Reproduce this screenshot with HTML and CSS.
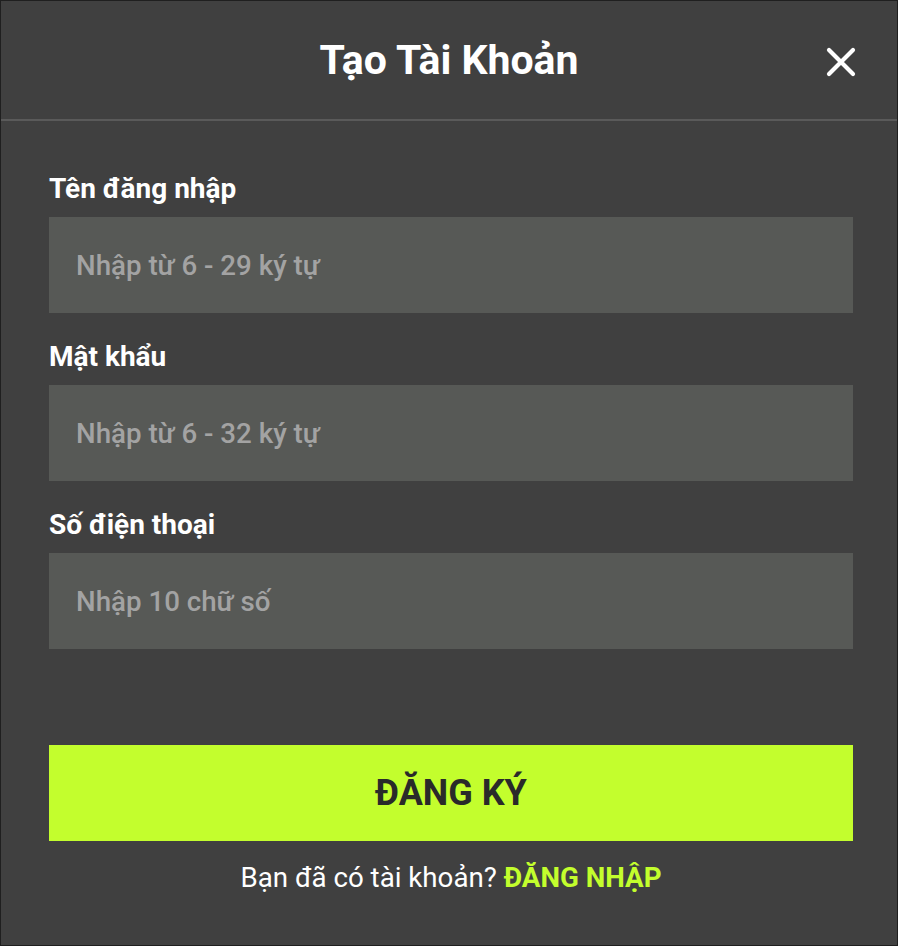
FILE: index.html
```html
<!DOCTYPE html>
<html lang="vi">
<head>
<meta charset="utf-8">
<title>Tạo Tài Khoản</title>
<link rel="stylesheet" href="styles.css">
</head>
<body>
<div class="modal">
  <header class="modal-header">
    <h1 class="modal-title">Tạo Tài Khoản</h1>
    <button class="close-btn" aria-label="Đóng">
      <svg width="34" height="34" viewBox="0 0 34 34"><path d="M5 5 L29 29 M29 5 L5 29" stroke="#fff" stroke-width="4.2" stroke-linecap="round" fill="none"/></svg>
    </button>
  </header>
  <form class="modal-body">
    <div class="field">
      <label class="field-label">Tên đăng nhập</label>
      <input class="field-input" type="text" placeholder="Nhập từ 6 - 29 ký tự">
    </div>
    <div class="field">
      <label class="field-label">Mật khẩu</label>
      <input class="field-input" type="password" placeholder="Nhập từ 6 - 32 ký tự">
    </div>
    <div class="field">
      <label class="field-label">Số điện thoại</label>
      <input class="field-input" type="tel" placeholder="Nhập 10 chữ số">
    </div>
    <button type="button" class="submit-btn">ĐĂNG KÝ</button>
    <p class="footer-text">Bạn đã có tài khoản? <a class="login-link" href="#">ĐĂNG NHẬP</a></p>
  </form>
</div>
</body>
</html>
```

FILE: styles.css
```css
* { box-sizing: border-box; }
html, body { margin: 0; padding: 0; }
body {
  background: #404040;
  font-family: Roboto, "Liberation Sans", sans-serif;
}
.modal {
  width: 898px;
  height: 946px;
  background: #404040;
  border: 1px solid #1f1f1f;
  display: flex;
  flex-direction: column;
}
.modal-header {
  height: 120px;
  border-bottom: 2px solid #5a5a5a;
  display: flex;
  align-items: center;
  justify-content: center;
  position: relative;
  flex-shrink: 0;
}
.modal-title {
  margin: 0;
  color: #ffffff;
  font-size: 41px;
  font-weight: 700;
  line-height: 46px;
}
.close-btn {
  position: absolute;
  right: 39px;
  top: 44px;
  width: 34px;
  height: 34px;
  padding: 0;
  border: 0;
  background: none;
  cursor: pointer;
}
.close-btn svg { display: block; }
.modal-body {
  margin: 0;
  padding: 54px 44px 0 48px;
  display: flex;
  flex-direction: column;
}
.field {
  display: flex;
  flex-direction: column;
  gap: 14px;
  margin-bottom: 30px;
}
.field-label {
  color: #ffffff;
  font-size: 28px;
  font-weight: 700;
  line-height: 28px;
}
.field-input {
  height: 96px;
  width: 804px;
  background: #575956;
  border: 0;
  padding: 0 27px;
  color: #ffffff;
  font-family: Roboto, "Liberation Sans", sans-serif;
  font-size: 27.7px;
  font-weight: 500;
  outline: none;
}
.field-input::placeholder { color: #a3a3a3; }
.submit-btn {
  margin-top: 66px;
  height: 96px;
  width: 804px;
  background: #c3fe2d;
  border: 0;
  color: #2a2a2a;
  font-family: Roboto, "Liberation Sans", sans-serif;
  font-size: 36px;
  font-weight: 700;
  cursor: pointer;
}
.footer-text {
  margin: 22px 0 0;
  text-align: center;
  color: #ffffff;
  font-size: 27.7px;
  line-height: 30px;
}
.login-link {
  color: #c3fe2d;
  font-weight: 700;
  text-decoration: none;
}
```
